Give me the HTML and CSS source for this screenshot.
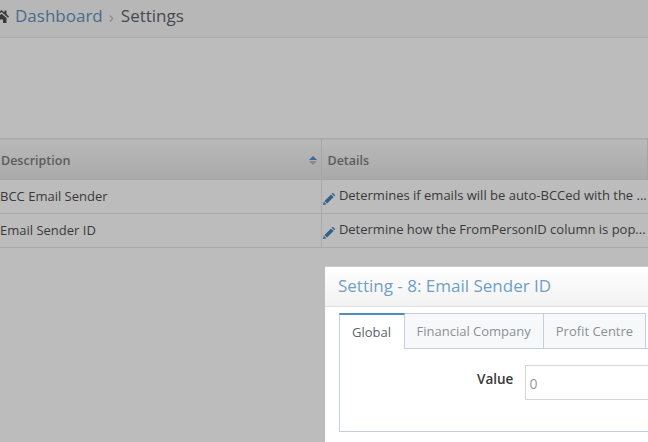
FILE: index.html
```html
<!DOCTYPE html>
<html lang="en">
<head>
  <meta charset="UTF-8">
  <title>Settings</title>
  <link rel="stylesheet" href="styles.css">
</head>
<body>

  <div class="crumbs">
    <svg class="home" width="15" height="14" viewBox="0 0 15 14"><path d="M7.500 1 0 7.500l1 1.200L7.500 3l6.500 5.700 1-1.200-2.500-2.200V1.500h-2v2zM2.500 9v5H6v-3.500h3V14h3.500V9l-5-4.300z"/></svg>
    <a class="crumb-link">Dashboard</a>
    <span class="crumb-sep">›</span>
    <span class="crumb-current">Settings</span>
  </div>

  <table class="grid">
    <thead>
      <tr>
        <th class="col-desc">
          <div class="th-inner">
            Description
            <span class="sort"><i class="up"></i><i class="down"></i></span>
          </div>
        </th>
        <th class="col-details">Details</th>
      </tr>
    </thead>
    <tbody>
      <tr>
        <td class="desc">BCC Email Sender</td>
        <td class="details">
          <svg class="pencil" width="12" height="12" viewBox="0 0 12 12"><path d="M0 12l.8-3.400 2.600 2.600zM1.500 7.900 8 1.400l2.600 2.600-6.500 6.500zM8.700.7l.5-.5c.3-.3.800-.3 1.100 0l1.500 1.500c.3.300.3.800 0 1.100l-.5.5z"/></svg>
          Determines if emails will be auto-BCCed with the ...
        </td>
      </tr>
      <tr>
        <td class="desc">Email Sender ID</td>
        <td class="details">
          <svg class="pencil" width="12" height="12" viewBox="0 0 12 12"><path d="M0 12l.8-3.400 2.600 2.600zM1.500 7.900 8 1.400l2.600 2.600-6.500 6.500zM8.700.7l.5-.5c.3-.3.800-.3 1.100 0l1.500 1.500c.3.300.3.800 0 1.100l-.5.5z"/></svg>
          Determine how the FromPersonID column is pop...
        </td>
      </tr>
    </tbody>
  </table>

  <!-- popup for editing one setting -->
  <div class="modal">
    <div class="modal-head">Setting - 8: Email Sender ID</div>
    <div class="modal-body">
      <div class="tabs">
        <div class="tab active">Global</div>
        <div class="tab">Financial Company</div>
        <div class="tab">Profit Centre</div>
      </div>
      <div class="pane">
        <label class="field-label">Value</label>
        <div class="field-input">0</div>
      </div>
    </div>
  </div>

</body>
</html>
```

FILE: styles.css
```css
* { margin: 0; padding: 0; box-sizing: border-box; }
html, body {
  width: 648px;
  height: 442px;
  overflow: hidden;
}
body {
  background: #bcbcbc;
  font-family: 'Open Sans', sans-serif;
  font-size: 13px;
  color: #333;
  position: relative;
}
.crumbs {
  height: 38px;
  background: #b7b7b7;
  border-bottom: 1px solid #adadad;
  display: flex;
  align-items: center;
  padding-bottom: 6px;
  font-size: 17px;
}
.home {
  margin-left: -6px;
  margin-right: 6px;
  fill: #3a3a3a;
}
.crumb-link { color: #476c8c; }
.crumb-sep {
  color: #868686;
  margin: 0 7px 0 6px;
  padding-top: 2px;
}
.crumb-current { color: #454a50; }
.grid {
  margin-top: 100px;
  width: 648px;
  border-collapse: collapse;
  table-layout: fixed;
  border-top: 1px solid #a9a9a9;
}
.col-desc { width: 321px; }
th {
  height: 41px;
  background: linear-gradient(#b9b9b9, #a9a9a9);
  color: #5c5c5c;
  font-size: 12.5px;
  font-weight: 600;
  text-align: left;
  border-bottom: 1px solid #a5a5a5;
  border-right: 1px solid #a5a5a5;
  padding: 2px 4px 0 1px;
}
th.col-details { padding-left: 6px; }
.th-inner {
  display: flex;
  justify-content: space-between;
  align-items: center;
}
.sort {
  display: flex;
  flex-direction: column;
  gap: 1px;
}
.sort i {
  display: block;
  border-left: 4px solid transparent;
  border-right: 4px solid transparent;
}
.sort .up { border-bottom: 4px solid #3d6a96; }
.sort .down { border-top: 4px solid #8a8a8a; }
td {
  height: 34px;
  padding-bottom: 2px;
  border-bottom: 1px solid #a9a9a9;
  border-right: 1px solid #a9a9a9;
  white-space: nowrap;
  overflow: hidden;
  color: #3a3a3a;
}
td.details {
  padding-left: 1px;
  border-right: 0;
}
.pencil {
  fill: #33618e;
  vertical-align: -5px;
  margin-right: 1px;
}
.modal {
  position: absolute;
  left: 325px;
  top: 266px;
  right: 0;
  bottom: 0;
  overflow: hidden;
  background: #fff;
  border-top: 1px solid #ccc;
}
.modal-head {
  height: 40px;
  background: linear-gradient(#fff, #f2f2f2);
  border-bottom: 1px solid #e0e0e0;
  color: #6f9fc6;
  font-size: 17px;
  line-height: 38px;
  padding-left: 13px;
}
.modal-body { padding: 6px 0 0 14px; }
.tabs {
  display: flex;
  height: 36px;
  position: relative;
  z-index: 1;
}
.tab {
  padding: 0 12px;
  background: #f7f8fa;
  border: 1px solid #c5d0de;
  border-left: 0;
  color: #8b9095;
  line-height: 34px;
}
.tab.active {
  padding-right: 12.5px;
  background: #fff;
  color: #5a6570;
  border-left: 1px solid #c5d0de;
  border-top: 2px solid #4c8fbd;
  border-bottom: 0;
}
.pane {
  margin-top: -1px;
  height: 84px;
  border: 1px solid #c5d0de;
  border-right: 0;
  display: flex;
  align-items: flex-start;
  padding: 16px 0 0 137px;
}
.field-label {
  color: #393939;
  font-weight: 600;
  font-size: 13.5px;
  margin-top: 5px;
  margin-right: 12px;
}
.field-input {
  flex: 1;
  height: 35px;
  border: 1px solid #d5d5d5;
  border-right: 0;
  color: #999;
  font-size: 14px;
  line-height: 35px;
  padding-left: 3px;
}
```
